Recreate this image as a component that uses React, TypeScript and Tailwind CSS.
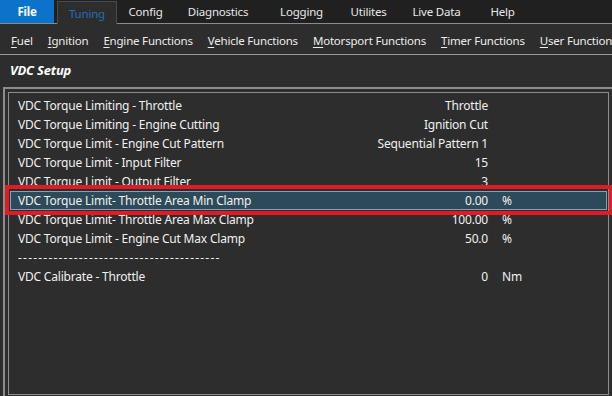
const topMenu: [string, string][] = [
  ["Config", "w-[57px]"],
  ["Diagnostics", "w-[88px]"],
  ["Logging", "w-[79px]"],
  ["Utilites", "w-[55px]"],
  ["Live Data", "w-[81px]"],
  ["Help", "w-[51px]"],
];

const subMenu: [string, string][] = [
  ["F", "uel"],
  ["I", "gnition"],
  ["E", "ngine Functions"],
  ["V", "ehicle Functions"],
  ["M", "otorsport Functions"],
  ["T", "imer Functions"],
  ["U", "ser Functions"],
];

type Row = { label: string; value?: string; unit?: string; selected?: boolean; dashes?: boolean };

const rows: Row[] = [
  { label: "VDC Torque Limiting - Throttle", value: "Throttle" },
  { label: "VDC Torque Limiting - Engine Cutting", value: "Ignition Cut" },
  { label: "VDC Torque Limit - Engine Cut Pattern", value: "Sequential Pattern 1" },
  { label: "VDC Torque Limit - Input Filter", value: "15" },
  { label: "VDC Torque Limit - Output Filter", value: "3" },
  { label: "VDC Torque Limit- Throttle Area Min Clamp", value: "0.00", unit: "%", selected: true },
  { label: "VDC Torque Limit- Throttle Area Max Clamp", value: "100.00", unit: "%" },
  { label: "VDC Torque Limit - Engine Cut Max Clamp", value: "50.0", unit: "%" },
  { label: "----------------------------------------", dashes: true },
  { label: "VDC Calibrate - Throttle", value: "0", unit: "Nm" },
];

export default function App() {
  return (
    <div
      className="relative w-[612px] h-[396px] overflow-hidden bg-[#2d2d2d] text-[12px] tracking-[-0.2px] text-[#f0f0f0] flex flex-col"
      style={{ fontFamily: '"Noto Sans", "Open Sans", sans-serif' }}
    >
      {/* top menu */}
      <div className="h-[24px] flex items-end bg-[#202020] border-b border-[#8a8a8a] shrink-0 text-[11.5px] whitespace-nowrap">
        <div className="w-[54px] h-[23px] bg-[#0b73c9] flex items-center justify-center font-bold text-white pt-px">
          File
        </div>
        <div className="ml-[3px] w-[60px] h-[23px] -mb-px bg-[#2d2d2d] border border-b-0 border-[#4a4a4a] flex items-center justify-center text-[#1f6fb8] pt-px">
          Tuning
        </div>
        {topMenu.map(([m, w]) => (
          <div key={m} className={w + " h-[23px] shrink-0 flex items-center justify-center text-[#e8e8e8] pt-px"}>
            {m}
          </div>
        ))}
      </div>

      {/* sub menu */}
      <div className="h-[31px] flex items-center gap-[15px] pl-[11px] pt-[3px] border-b border-[#9a9a9a] whitespace-nowrap shrink-0 text-[11.5px]">
        {subMenu.map(([k, rest]) => (
          <span key={k + rest} className="text-[#ececec]">
            <span className="underline underline-offset-2">{k}</span>
            {rest}
          </span>
        ))}
      </div>

      {/* header */}
      <div className="h-[32px] flex items-center pl-[10px] font-bold italic text-white text-[13px] shrink-0">
        VDC Setup
      </div>

      {/* outer frame */}
      <div className="flex-1 ml-[3px] border-t-2 border-l-2 border-[#8c8c8c] pt-[3px] pl-[3px] flex">
        <div className="flex-1 mr-[3px] mb-[1px] border border-[#8c8c8c] pt-[3px] pl-px pr-px">
          {rows.map((r) => (
            <div
              key={r.label}
              className={
                "h-[19px] flex items-center " +
                (r.selected ? "bg-[#2c4a5a] border border-[#7fa3bb]" : "border border-transparent")
              }
            >
              <div className={"pl-[7px] w-[300px] whitespace-nowrap " + (r.dashes ? "tracking-[1.2px]" : "")}>
                {r.label}
              </div>
              <div className="w-[177px] text-right whitespace-nowrap">{r.value}</div>
              <div className="pl-[14px]">{r.unit}</div>
            </div>
          ))}
        </div>
      </div>

      {/* annotation box */}
      <div className="absolute left-[5px] top-[185px] w-[608px] h-[30px] border-[4px] border-[#e01b24]" />
    </div>
  );
}
